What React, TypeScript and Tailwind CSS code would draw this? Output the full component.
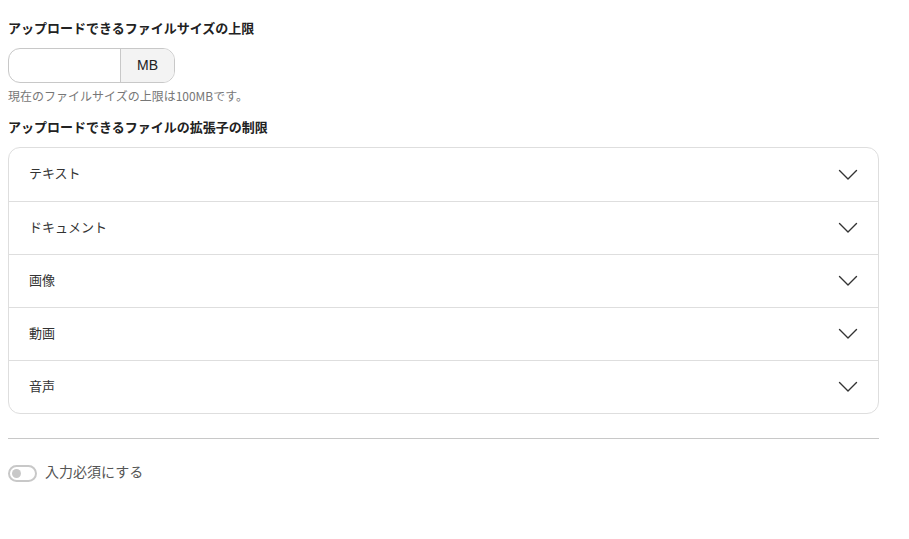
const font = {
  fontFamily: '"Noto Sans CJK JP", "Noto Sans", sans-serif',
};

const categories = ["テキスト", "ドキュメント", "画像", "動画", "音声"];

function Chevron() {
  return (
    <svg width="20" height="12" viewBox="0 0 20 12" fill="none">
      <path
        d="M1.5 1.5 L10 10 L18.5 1.5"
        stroke="#333"
        strokeWidth="1.4"
        strokeLinecap="round"
        strokeLinejoin="round"
      />
    </svg>
  );
}

function App() {
  return (
    <div className="min-h-[539px] bg-white text-[#333]" style={font}>
      <div className="w-[871px] ml-2 pt-[18px]">
        <h2 className="text-[13px] font-bold leading-[20px] text-[#222]">
          アップロードできるファイルサイズの上限
        </h2>
        <div className="mt-[10px] flex h-[35px] w-[167px] rounded-[12px] border border-[#c8c8c8] overflow-hidden">
          <input className="w-[111px] h-full px-3 outline-none text-[14px]" />
          <div className="flex-1 flex items-center justify-center bg-[#f3f3f3] border-l border-[#c8c8c8] text-[14px] text-[#222] font-['Liberation_Sans',sans-serif]">
            MB
          </div>
        </div>
        <p className="mt-[4px] text-[12px] leading-[18px] text-[#777]">
          現在のファイルサイズの上限は100MBです。
        </p>
        <h2 className="mt-[12px] text-[13px] font-bold leading-[20px] text-[#222]">
          アップロードできるファイルの拡張子の制限
        </h2>
        <div className="mt-[10px] rounded-[12px] border border-[#dedede]">
          {categories.map((c, i) => (
            <div
              key={c}
              className={
                "flex h-[53px] items-center justify-between pl-5 pr-[20px] " +
                (i > 0 ? "border-t border-[#dedede]" : "")
              }
            >
              <span className="text-[13px] text-[#333] -mt-[3px]">{c}</span>
              <Chevron />
            </div>
          ))}
        </div>
        <hr className="mt-[24px] border-t border-[#c8c8c8]" />
        <label className="mt-[25px] flex items-center gap-2">
          <span className="relative flex h-[17px] w-[29px] items-center rounded-full border-2 border-[#c8c8c8] bg-white">
            <span className="ml-[2px] h-[9px] w-[9px] rounded-full bg-[#c8c8c8]" />
          </span>
          <span className="text-[14px] text-[#555] -mt-[3px]">入力必須にする</span>
        </label>
      </div>
    </div>
  );
}

export default App;
